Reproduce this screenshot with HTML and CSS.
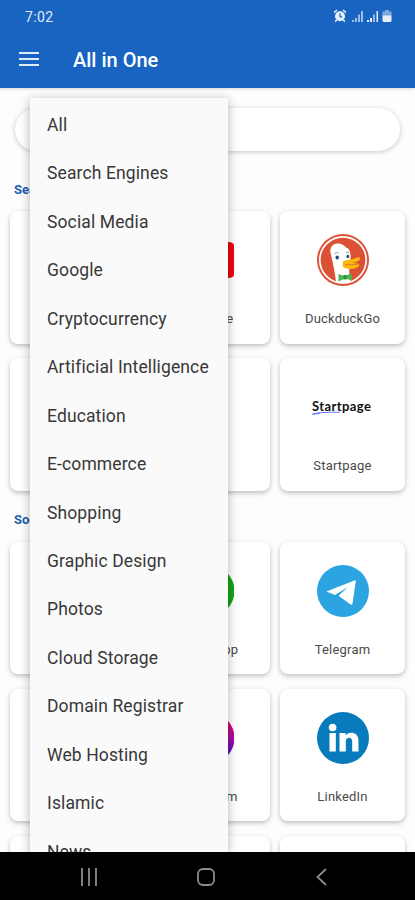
FILE: index.html
```html
<!DOCTYPE html>
<html lang="en">
<head>
<meta charset="utf-8">
<meta name="viewport" content="width=device-width, initial-scale=1">
<title>All in One</title>
<link rel="stylesheet" href="styles.css">
</head>
<body>
<div class="phone">
  <header class="top">
    <div class="status">
      <span class="time">7:02</span>
      <svg class="status-icons" width="60" height="16" viewBox="0 0 60 16" fill="#e6eefa">
        <circle cx="7" cy="8.2" r="5"/>
        <path d="M1.2 4.600 4 2M12.800 4.600 10 2M3.600 12l-1.400 1.800M10.400 12l1.400 1.800" stroke="#e6eefa" stroke-width="1.500"/>
        <path d="M7 5.200v3.200l2 1" fill="none" stroke="#1864c0" stroke-width="1.200"/>
        <path d="M19 12h2v2h-2zM22 10h2v4h-2zM25 6.500h2V14h-2zM28 3h2v11h-2z" opacity=".65"/>
        <path d="M34 12h2v2h-2zM37 10h2v4h-2z"/><path d="M40 6.500h2V14h-2z" opacity=".6"/><path d="M43.500 3h1.500v11h-1.500z"/>
        <path d="M52 2h4v1.500h2.500V8h-9V3.500H52z" opacity=".5"/><path d="M49.500 7.500h9V13l-1 1h-7l-1-1z"/>
      </svg>
    </div>
    <div class="toolbar">
      <svg width="20" height="14" viewBox="0 0 20 14" fill="#e2ecf9"><path d="M0 0h20v2H0zM0 6h20v2H0zM0 12h20v2H0z"/></svg>
      <h1>All in One</h1>
    </div>
  </header>

  <main class="content">
    <div class="search"></div>
    <h2>Search Engines</h2>
    <div class="grid">
      <div class="card"></div>
      <div class="card">
        <svg class="logo" viewBox="0 0 52 52"><rect x="1" y="8" width="52" height="36" rx="6" fill="#f00510"/><path d="M21 18v16l14-8z" fill="#fff"/></svg>
        <span>YouTube</span>
      </div>
      <div class="card">
        <svg class="logo" viewBox="0 0 52 52">
          <circle cx="26" cy="26" r="26" fill="#dc5135"/>
          <circle cx="26" cy="26" r="23.200" fill="none" stroke="#fff" stroke-width="1.700"/>
          <path d="M19 48.300C18 38 16 30 14 21C12 14 15 10 20 9.500C24 9 27 11 29 13.500C33 14.500 34 20 33.500 25L33 32C31 37 33 43 34 47C29 49.300 24 49.500 19 48.300z" fill="#fff"/>
          <path d="M26 30C24 26.500 29 26 34 25.500C38 25 41 22 43 24C44 26 40 28 36 29C41 29 43 30 42 32C39 35 33 36 28 34C25 33 25.500 31 26 30z" fill="#fcb80f"/>
          <path d="M28 30.500c5 1 9-1 13 0" fill="none" stroke="#dc7b25"/>
          <ellipse cx="20.200" cy="23.500" rx="1.700" ry="2" fill="#24446e"/><ellipse cx="30.800" cy="22.500" rx="1.400" ry="1.800" fill="#24446e"/>
          <path d="M17.500 19.500q2-1.500 4-.5M29 18.800q1.500-1 3 0" fill="none" stroke="#7e9cc4"/>
          <path d="M21.500 40l6 2 7-2.500.5 7-7-2-6.500 3z" fill="#4bb653"/><path d="M26.500 41h3v4.500h-3z" fill="#269345"/>
        </svg>
        <span>DuckduckGo</span>
      </div>
      <div class="card"></div>
      <div class="card"></div>
      <div class="card">
        <div class="logo startpage"><b>Startpage</b><svg width="30" height="4" viewBox="0 0 30 4"><path d="M0 3.200Q8 .8 28 1.200M1 3.200l7-1" fill="none" stroke="#6573ff" stroke-width="1"/></svg></div>
        <span>Startpage</span>
      </div>
    </div>
    <h2 class="second">Social Media</h2>
    <div class="grid">
      <div class="card"></div>
      <div class="card">
        <svg class="logo" viewBox="0 0 52 52"><circle cx="26.500" cy="26" r="26" fill="#16a516"/></svg>
        <span>WhatsApp</span>
      </div>
      <div class="card">
        <svg class="logo" viewBox="0 0 52 52"><circle cx="26" cy="26" r="26" fill="#2ba4e1"/><path d="M9.500 26.500 38 15.300q1-.3.800 1L35.500 38.500q-.5 2-2.300.8L21.500 30.800 31 22 18 30z" fill="#fff"/></svg>
        <span>Telegram</span>
      </div>
      <div class="card"></div>
      <div class="card">
        <svg class="logo" viewBox="0 0 52 52"><defs><linearGradient id="insta" x1="0" y1="0" x2="0" y2="1"><stop offset=".15" stop-color="#de0760"/><stop offset=".45" stop-color="#b00a9b"/><stop offset=".8" stop-color="#5b10bd"/></linearGradient></defs><circle cx="26.500" cy="26" r="26" fill="url(#insta)"/></svg>
        <span>Instagram</span>
      </div>
      <div class="card">
        <svg class="logo" viewBox="0 0 52 52"><circle cx="26" cy="26" r="26" fill="#087bbd"/><g fill="#fff"><circle cx="15.600" cy="15.500" r="3.800"/><path d="M12.500 21h6.300v18.500h-6.300zM22.500 21h6v2.500c3-4.500 13-4 13 5v11h-6.300v-10c0-5-6.400-5-6.400 0v10h-6.300z"/></g></svg>
        <span>LinkedIn</span>
      </div>
      <div class="card"></div>
      <div class="card"></div>
      <div class="card"></div>
    </div>
  </main>

  <ul class="menu">
    <li>All</li><li>Search Engines</li><li>Social Media</li><li>Google</li><li>Cryptocurrency</li><li>Artificial Intelligence</li><li>Education</li><li>E-commerce</li><li>Shopping</li><li>Graphic Design</li><li>Photos</li><li>Cloud Storage</li><li>Domain Registrar</li><li>Web Hosting</li><li>Islamic</li><li>News</li>
  </ul>

  <nav class="navbar">
    <svg width="18" height="18" viewBox="0 0 18 18"><path d="M2 0v18M9 0v18M16 0v18"/></svg>
    <svg width="18" height="18" viewBox="0 0 18 18"><rect x="1" y="1" width="16" height="16" rx="5"/></svg>
    <svg width="18" height="18" viewBox="0 0 18 18"><path d="M13 1 4.500 9l8.500 8"/></svg>
  </nav>
</div>
</body>
</html>
```
FILE: styles.css
```css
* { box-sizing: border-box; }
body { margin: 0; font-family: Roboto, "Liberation Sans", sans-serif; background: #fdfdfd; }
h1, h2, ul { margin: 0; padding: 0; }
.phone { position: relative; height: 900px; overflow: hidden; display: flex; flex-direction: column; }

.top { flex: none; height: 88px; background: #1864c0; color: #fff; box-shadow: 0 1px 3px rgba(0, 0, 0, .16); }
.status { height: 32px; padding: 0 22px 0 25px; display: flex; justify-content: space-between; align-items: center; }
.time { font-size: 14px; letter-spacing: .4px; color: #e0ebfa; padding-top: 1px; }
.toolbar { height: 56px; padding: 0 19px; display: flex; align-items: center; gap: 34px; }
.toolbar svg { margin-bottom: 3px; }
.toolbar h1 { font-size: 20px; font-weight: 500; line-height: 24px; }

.content { flex: 1; min-height: 0; overflow: hidden; padding: 20px 10px 0; }
.search { height: 43px; margin: 0 5px; border-radius: 22px; background: #fff; box-shadow: 0 1px 5px rgba(0, 0, 0, .22); }
.content h2 { margin: 30px 0 0 4px; height: 30px; font-size: 13px; line-height: 18px; font-weight: 700; color: #1a5fb4; }
.content h2.second { margin-top: 20px; height: 31px; }
.grid { display: grid; grid-template-columns: repeat(3, 1fr); grid-auto-rows: 132.500px; gap: 14.500px 10px; }
.card { display: flex; flex-direction: column; align-items: center; padding-top: 23px; gap: 23px; border-radius: 8px; background: #fff; box-shadow: 0 2px 5px rgba(0, 0, 0, .25); }
.card span { font-size: 13px; line-height: 20px; letter-spacing: .2px; color: #4a4a4a; }
.logo { width: 52px; height: 52px; flex: none; }
.startpage { width: 61px; display: flex; flex-direction: column; justify-content: center; color: #111; }
.startpage b { font: 700 13px/14px Lato, sans-serif; letter-spacing: .4px; }
.startpage svg { margin-top: -2px; }

.menu { position: absolute; top: 98px; left: 30px; width: 198px; height: 754px; padding-top: 3px; overflow: hidden; list-style: none; background: #fafafa; box-shadow: 0 2px 10px rgba(0, 0, 0, .3); }
.menu li { height: 48.450px; padding-left: 17px; line-height: 48.450px; font-size: 17.500px; letter-spacing: .12px; color: #383838; white-space: nowrap; }

.navbar { position: relative; flex: none; height: 48px; padding: 2px 84px 0 80px; background: #000; display: flex; justify-content: space-between; align-items: center; }
.navbar svg { fill: none; stroke: #8c8c8c; stroke-width: 1.800; }
```
